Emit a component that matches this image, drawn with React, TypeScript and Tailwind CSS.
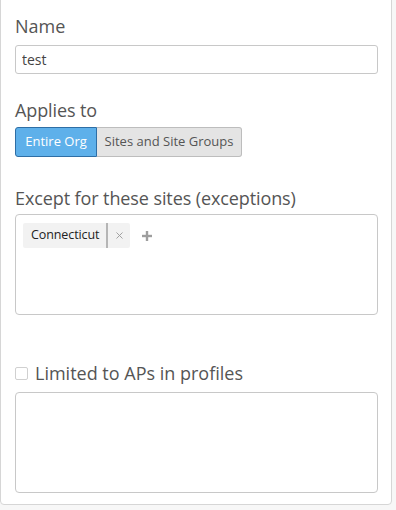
import { X } from 'lucide-react';

export default function App() {
  return (
    <div className="w-[396px] h-[510px] bg-[#f7f7f7] overflow-hidden font-['Open_Sans',sans-serif] text-[#555]">
      {/* panel, top edge is cut off by the viewport */}
      <div className="w-[392px] h-[506px] -mt-px bg-white border border-[#d6d6d6] rounded-b-[4px] pl-[14px] pr-[13px] pt-[14px]">
        <label className="block text-[18px] leading-[24px]">Name</label>
        <input
          readOnly
          value="test"
          className="mt-[7px] block w-full h-[29px] border border-[#c8c8c8] rounded-[3px] px-[6px] text-[14px] text-[#444] outline-none"
        />

        <div className="mt-[24px] text-[18px] leading-[24px] tracking-[-0.1px]">Applies to</div>
        <div className="mt-[5px] flex">
          <button className="h-[30px] w-[82px] bg-[#5eb0ea] border border-[#2e6ea5] rounded-l-[3px] text-white text-[13px]">
            Entire Org
          </button>
          <button className="h-[30px] w-[145px] bg-[#e4e4e4] border border-l-0 border-[#bdbdbd] rounded-r-[3px] text-[#555] text-[13px]">
            Sites and Site Groups
          </button>
        </div>

        <div className="mt-[29px] text-[18px] leading-[24px] tracking-[-0.1px]">Except for these sites (exceptions)</div>
        <div className="mt-[4px] h-[101px] border border-[#c8c8c8] rounded-[4px] pl-[7px] pt-[8px]">
          <div className="flex items-center">
            <div className="flex h-[25px] items-stretch bg-[#f2f2f2] rounded-[2px]">
              <span className="pl-[8px] pr-[7px] flex items-center text-[12.5px] text-[#222] tracking-[-0.1px]">Connecticut</span>
              <span className="w-[2px] bg-[#b5b5b5]" />
              <span className="w-[22px] flex items-center justify-center text-[#9a9a9a]">
                <X size={11} strokeWidth={2} />
              </span>
            </div>
            <svg width="10" height="10" viewBox="0 0 10 10" className="ml-[12px] text-[#9e9e9e]">
              <rect x="3.8" y="0" width="2.4" height="10" fill="currentColor" />
              <rect x="0" y="3.8" width="10" height="2.4" fill="currentColor" />
            </svg>
          </div>
        </div>

        <div className="mt-[46px] flex items-center">
          <span className="w-[13px] h-[13px] border border-[#d0d0d0] rounded-[2px] bg-white" />
          <span className="ml-[7px] text-[18px] leading-[24px]">Limited to APs in profiles</span>
        </div>
        <div className="mt-[7px] h-[101px] border border-[#c8c8c8] rounded-[4px]" />
      </div>
    </div>
  );
}
